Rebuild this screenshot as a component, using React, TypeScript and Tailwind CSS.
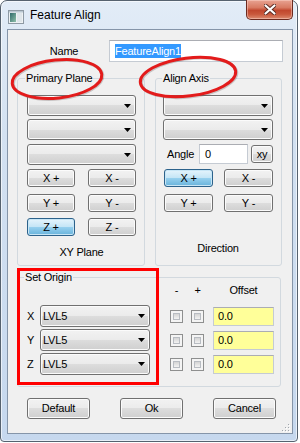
import React from "react";

const BTN =
  "flex items-center justify-center rounded-[3px] border border-[#707070] bg-[linear-gradient(#f2f2f2,#ebebeb_50%,#dddddd_50%,#cfcfcf)] shadow-[inset_0_0_0_1px_#fbfbfb] text-black";
const BTN_BLUE =
  "flex items-center justify-center rounded-[3px] border border-[#2c628b] bg-[linear-gradient(#e5f4fc,#c4e5f6_50%,#98d1ef_50%,#68b3db)] shadow-[inset_0_0_0_1px_#c8e6f6] text-black";

function Arrow() {
  return (
    <svg width="7" height="4" viewBox="0 0 7 4" className="shrink-0">
      <path d="M0 0H7L3.5 4Z" fill="#000" />
    </svg>
  );
}

function Combo({ className = "", text = "" }: { className?: string; text?: string }) {
  return (
    <div
      className={
        "flex items-center justify-between rounded-[3px] border border-[#707070] bg-[linear-gradient(#f2f2f2,#ebebeb_50%,#dddddd_50%,#cfcfcf)] shadow-[inset_0_0_0_1px_#fbfbfb] pl-[2px] pr-[4px] " +
        className
      }
    >
      <span className="leading-[14px]">{text}</span>
      <Arrow />
    </div>
  );
}

function Check() {
  return (
    <div className="w-[13px] h-[13px] border border-[#8e8f8f] bg-[#f4f4f4] p-[2px] shrink-0">
      <div className="w-full h-full border border-[#b8bcc2] bg-[linear-gradient(#d4d4d4,#f2f2f2)]" />
    </div>
  );
}

function Legend({ className = "", children }: { className?: string; children: React.ReactNode }) {
  return (
    <span className={"absolute top-[-8px] px-[1px] bg-[#f0f0f0] leading-[14px] text-black " + className}>
      {children}
    </span>
  );
}

export default function App() {
  return (
    <div className="relative w-[300px] h-[443px] bg-white overflow-hidden font-['Liberation_Sans',Arial,sans-serif] text-[11px] tracking-[-0.2px] text-black">
      <div className="w-[298px] h-[442px] border border-[#56626f] rounded-t-[7px] rounded-b-[4px] bg-[linear-gradient(#e2ecf7,#d3e1f1_30%,#c6d8ee)] shadow-[inset_0_0_0_1px_rgba(255,255,255,0.6)] flex flex-col">
        {/* title bar */}
        <div className="h-[28px] shrink-0 flex items-start">
          <div className="ml-[7px] mt-[9px]">
            <svg width="16" height="14" viewBox="0 0 16 14">
              <defs>
                <linearGradient id="ig" x1="0" y1="0" x2="1" y2="1">
                  <stop offset="0" stopColor="#2f6a6a" />
                  <stop offset="1" stopColor="#8fc0aa" />
                </linearGradient>
              </defs>
              <rect x="0.5" y="0.5" width="15" height="13" fill="#eef2f4" stroke="#8e9aa4" />
              <rect x="2" y="3" width="6" height="9" fill="url(#ig)" />
              <rect x="9" y="3" width="5" height="9" fill="#dfe6ea" />
              <rect x="1" y="1" width="14" height="1.5" fill="#b8c6d0" />
            </svg>
          </div>
          <div className="ml-[6px] mt-[6px] text-[12px] leading-[16px] tracking-normal">Feature Align</div>
          <div className="ml-auto mr-[4px] -mt-px w-[47px] h-[20px] rounded-b-[5px] border border-[#6b2a1f] border-t-0 bg-[linear-gradient(#e8a392,#d87a62_40%,#c1472e_55%,#c9583c_75%,#dc8b70)] shadow-[inset_0_0_0_1px_rgba(255,220,210,0.45)] flex items-center justify-center">
            <svg width="12" height="11" viewBox="0 0 12 11">
              <path d="M1.5 1.5L10.5 9.5M10.5 1.5L1.5 9.5" stroke="#5a2a22" strokeWidth="4" strokeLinecap="round" />
              <path d="M1.5 1.5L10.5 9.5M10.5 1.5L1.5 9.5" stroke="#ffffff" strokeWidth="2.2" strokeLinecap="round" />
            </svg>
          </div>
        </div>

        {/* client */}
        <div className="relative ml-[6px] w-[286px] h-[405px] border border-[#8595a9] bg-[#f0f0f0] flex flex-col">
          {/* name row */}
          <div className="mt-[10px] flex items-center">
            <div className="w-[101px] pl-[11px] text-center">Name</div>
            <div className="w-[174px] h-[22px] border border-[#c5cbd3] border-t-[#abadb3] bg-white flex items-center pl-[5px]">
              <span className="bg-[#3399ff] text-white leading-[14px]">FeatureAlign1</span>
            </div>
          </div>

          {/* planes */}
          <div className="mt-[16px] pl-[9px] flex gap-[10px]">
            <div className="relative w-[128px] h-[188px] border border-[#d2d9df] rounded-[3px] pl-[9px] pt-[16px] flex flex-col">
              <Legend className="left-[7px]">Primary Plane</Legend>
              <Combo className="w-[109px] h-[21px]" />
              <Combo className="mt-[3px] w-[109px] h-[21px]" />
              <Combo className="mt-[4px] w-[109px] h-[21px]" />
              <div className="mt-[4px] w-[109px] flex justify-between">
                <div className={BTN + " w-[48px] h-[18px]"}>X +</div>
                <div className={BTN + " w-[48px] h-[18px]"}>X -</div>
              </div>
              <div className="mt-[7px] w-[109px] flex justify-between">
                <div className={BTN + " w-[48px] h-[18px]"}>Y +</div>
                <div className={BTN + " w-[48px] h-[18px]"}>Y -</div>
              </div>
              <div className="mt-[6px] w-[109px] flex justify-between">
                <div className={BTN_BLUE + " w-[48px] h-[18px]"}>Z +</div>
                <div className={BTN + " w-[48px] h-[18px]"}>Z -</div>
              </div>
              <div className="mt-[9px] w-[109px] text-center leading-[14px]">XY Plane</div>
            </div>

            <div className="relative w-[127px] h-[188px] border border-[#d2d9df] rounded-[3px] pl-[7px] pt-[16px] flex flex-col">
              <Legend className="left-[6px]">Align Axis</Legend>
              <Combo className="w-[110px] h-[21px]" />
              <Combo className="mt-[3px] w-[110px] h-[21px]" />
              <div className="mt-[4px] h-[20px] flex items-center">
                <span className="w-[36px] pl-[4px] leading-[14px]">Angle</span>
                <div className="w-[49px] h-[20px] border border-[#c5cbd3] border-t-[#abadb3] bg-white flex items-center pl-[5px]">
                  0
                </div>
                <div className={BTN + " ml-[3px] w-[22px] h-[18px]"}>xy</div>
              </div>
              <div className="mt-[5px] w-[110px] flex">
                <div className={BTN_BLUE + " ml-[1px] w-[49px] h-[18px]"}>X +</div>
                <div className={BTN + " ml-auto w-[49px] h-[18px]"}>X -</div>
              </div>
              <div className="mt-[7px] w-[110px] flex">
                <div className={BTN + " ml-[1px] w-[49px] h-[18px]"}>Y +</div>
                <div className={BTN + " ml-auto w-[49px] h-[18px]"}>Y -</div>
              </div>
              <div className="mt-[29px] w-[110px] text-center leading-[14px]">Direction</div>
            </div>
          </div>

          {/* set origin */}
          <div className="relative mt-[11px] ml-[9px] w-[264px] h-[110px] border border-[#d2d9df] rounded-[3px] pl-[9px] pt-[5px] flex flex-col">
            <Legend className="left-[6px]">Set Origin</Legend>
            <div className="h-[14px] flex leading-[14px]">
              <div className="w-[143px]" />
              <div className="w-[13px] text-center">-</div>
              <div className="ml-[8px] w-[13px] text-center">+</div>
              <div className="ml-[9px] w-[61px] text-center">Offset</div>
            </div>
            <div className="mt-[8px] flex flex-col gap-[2px]">
              {["X", "Y", "Z"].map((a) => (
                <div key={a} className="h-[22px] flex items-center">
                  <div className="w-[13px] leading-[14px]">{a}</div>
                  <Combo className="w-[110px] h-[22px]" text="LVL5" />
                  <div className="ml-[20px]">
                    <Check />
                  </div>
                  <div className="ml-[8px]">
                    <Check />
                  </div>
                  <div className="ml-[9px] w-[61px] h-[19px] border border-[#c5cbd3] border-t-[#abadb3] bg-[#ffff99] flex items-center pl-[4px]">
                    0.0
                  </div>
                </div>
              ))}
            </div>
            <div className="absolute left-[-1px] top-[-10px] w-[142px] h-[117px] border-[3px] border-[#ff0000]" />
          </div>

          {/* buttons */}
          <div className="mt-[11px] ml-[19px] flex gap-[30px]">
            <div className={BTN + " w-[63px] h-[21px]"}>Default</div>
            <div className={BTN + " w-[63px] h-[21px]"}>Ok</div>
            <div className={BTN + " w-[63px] h-[21px]"}>Cancel</div>
          </div>

          {/* size grip */}
          <svg width="10" height="10" viewBox="0 0 10 10" className="absolute right-[2px] bottom-[1px]">
            {[
              [8, 2],
              [8, 5],
              [5, 5],
              [8, 8],
              [5, 8],
              [2, 8],
            ].map(([x, y], i) => (
              <g key={i}>
                <rect x={x} y={y} width="1" height="1" fill="#a0a6ad" />
                <rect x={x + 1} y={y + 1} width="1" height="1" fill="#ffffff" />
              </g>
            ))}
          </svg>
        </div>
      </div>

      {/* annotation ellipses */}
      <svg width="300" height="443" className="absolute inset-0 pointer-events-none">
        <g transform="rotate(-6 57 79)">
          <ellipse cx="58" cy="80" rx="45" ry="19" fill="none" stroke="rgba(80,60,60,0.25)" strokeWidth="3" />
          <ellipse cx="57" cy="79" rx="45" ry="19" fill="none" stroke="#e31b1b" strokeWidth="3" />
        </g>
        <g transform="rotate(-7 188 77)">
          <ellipse cx="189" cy="78" rx="48" ry="19" fill="none" stroke="rgba(80,60,60,0.25)" strokeWidth="3" />
          <ellipse cx="188" cy="77" rx="48" ry="19" fill="none" stroke="#e31b1b" strokeWidth="3" />
        </g>
      </svg>
    </div>
  );
}
